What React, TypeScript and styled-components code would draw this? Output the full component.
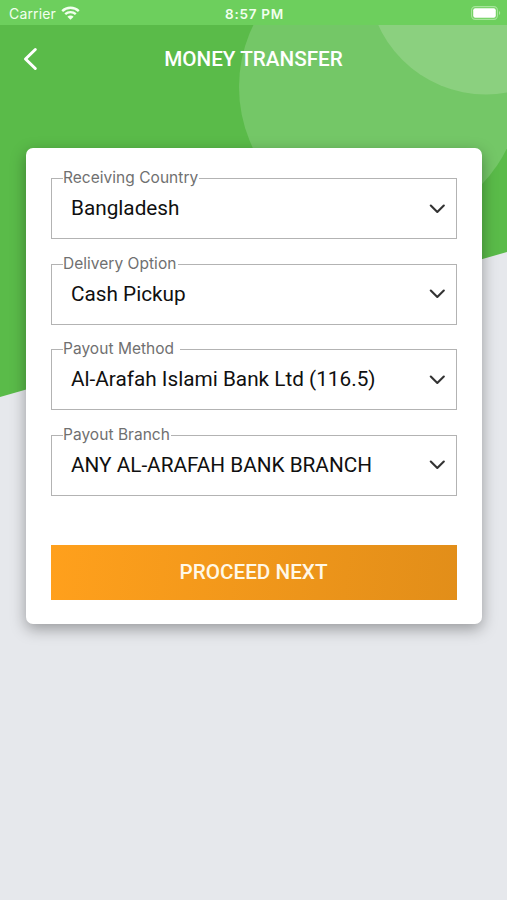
import React from "react";
import styled, { createGlobalStyle } from "styled-components";

const GlobalStyle = createGlobalStyle`
  * { box-sizing: border-box; }
  body { margin: 0; background: #e6e8ec; font-family: Roboto, "Liberation Sans", sans-serif; }
`;

const Screen = styled.main`
  position: relative;
  display: flex;
  flex-direction: column;
  height: 900px;
  overflow: hidden;
  background: #e6e8ec;
`;

const Backdrop = styled.svg`
  position: absolute;
  top: 0;
  left: 0;
  width: 507px;
  height: 400px;
`;

const StatusBar = styled.div`
  position: relative;
  display: grid;
  grid-template-columns: 1fr auto 1fr;
  align-items: center;
  height: 25px;
  padding: 2px 6px 0 9px;
  background: #6dcf5d;
  color: #f2ffef;
  font-family: Inter, sans-serif;
  font-size: 14px;
  line-height: 20px;
`;

const Carrier = styled.div`
  display: flex;
  align-items: center;
  gap: 5.5px;
  letter-spacing: 0.15px;

  svg {
    margin-top: -2px;
  }
`;

const Clock = styled.div`
  font-weight: 600;
  font-size: 13.5px;
  letter-spacing: 0.75px;
  padding-right: 1px;
`;

const Battery = styled.svg`
  justify-self: end;
  margin-top: -2px;
`;

const Header = styled.header`
  position: relative;
  display: grid;
  grid-template-columns: 48px 1fr 48px;
  align-items: center;
  height: 68px;
  color: #fff;
`;

const BackButton = styled.button`
  display: flex;
  padding: 0 0 0 22px;
  border: 0;
  background: none;
  color: inherit;
`;

const Title = styled.h1`
  margin: 0;
  text-align: center;
  font-size: 20.7px;
  font-weight: 500;
  line-height: 24px;
`;

const Card = styled.form`
  position: relative;
  display: flex;
  flex-direction: column;
  margin: 55px 25px 0 26px;
  height: 476px;
  padding: 30px 25px 24.5px;
  border-radius: 7px;
  background: #fff;
  box-shadow: 0 5px 15px rgba(0, 0, 0, 0.34);
`;

const Fields = styled.div`
  display: flex;
  flex-direction: column;
  gap: 24.5px;
`;

const Field = styled.div`
  position: relative;
  display: flex;
  align-items: center;
  justify-content: space-between;
  height: 61px;
  padding: 0 11px 0 19px;
  border: 1.5px solid #b3b3b3;
`;

const Label = styled.span<{ $width: number }>`
  position: absolute;
  top: -11px;
  left: 11px;
  width: ${(p) => p.$width}px;
  background: #fff;
  color: #707070;
  font-family: Inter, sans-serif;
  font-size: 15.5px;
  line-height: 20px;
  letter-spacing: 0.03px;
  white-space: nowrap;
`;

const Value = styled.span`
  color: #101010;
  font-size: 20.75px;
  line-height: 24px;
  margin-top: -0.4px;
  white-space: nowrap;
`;

const Submit = styled.button`
  height: 55px;
  margin-top: auto;
  padding: 0 1px 0 0;
  border: 0;
  background: linear-gradient(95deg, #ffa01c 0%, #e28e19 100%);
  color: #fff8e8;
  font-family: inherit;
  font-size: 20.7px;
  font-weight: 500;
`;

const fields = [
  { label: "Receiving Country", value: "Bangladesh", width: 136 },
  { label: "Delivery Option", value: "Cash Pickup", width: 115 },
  { label: "Payout Method", value: "Al-Arafah Islami Bank Ltd (116.5)", width: 117 },
  { label: "Payout Branch", value: "ANY AL-ARAFAH BANK BRANCH", width: 108 },
];

export default function App() {
  return (
    <>
      <GlobalStyle />
      <Screen>
        <Backdrop viewBox="0 0 507 400" aria-hidden="true">
          <defs>
            <clipPath id="slope">
              <path d="M0 0H507V252L0 397Z" />
            </clipPath>
          </defs>
          <g clipPath="url(#slope)">
            <rect width="507" height="400" fill="#5abb49" />
            <circle cx="380" cy="87" r="141" fill="#74c767" />
            <circle cx="486" cy="-24" r="118.5" fill="#8bd07f" />
          </g>
        </Backdrop>
        <StatusBar>
          <Carrier>
            Carrier
            <svg width="19" height="14" viewBox="0 0 19 14" fill="none" stroke="currentColor" strokeWidth="2.4">
              <path d="M1.2 5.1C5.8.7 13.2.7 17.8 5.1M4.2 8.2c3-2.8 7.6-2.8 10.6 0" />
              <path d="M6.4 10.7c1.8-1.6 4.4-1.6 6.2 0L9.5 13.8Z" fill="currentColor" stroke="none" />
            </svg>
          </Carrier>
          <Clock>8:57 PM</Clock>
          <Battery width="30" height="14" viewBox="0 0 30 14">
            <rect x=".6" y=".6" width="25.8" height="12.8" rx="3.6" fill="none" stroke="#a7e59c" strokeWidth="1.1" />
            <rect x="2.2" y="2.2" width="22.6" height="9.6" rx="2" fill="#fff" />
            <path d="M28 5v4c1.6-.6 1.6-3.4 0-4Z" fill="#a7e59c" />
          </Battery>
        </StatusBar>
        <Header>
          <BackButton type="button" aria-label="Back">
            <svg width="18" height="24" viewBox="0 0 18 24" fill="none" stroke="currentColor" strokeWidth="3" strokeLinecap="round" strokeLinejoin="round">
              <path d="M13.3 2.5 3.5 12l9.8 9.5" />
            </svg>
          </BackButton>
          <Title>MONEY TRANSFER</Title>
        </Header>
        <Card>
          <Fields>
            {fields.map((f) => (
              <Field key={f.label}>
                <Label $width={f.width}>{f.label}</Label>
                <Value>{f.value}</Value>
                <svg width="16" height="10" viewBox="0 0 16 10" fill="none" stroke="#333" strokeWidth="2.1" strokeLinecap="round" strokeLinejoin="round">
                  <path d="M1.8 1.5 8.3 7.9l6.5-6.4" />
                </svg>
              </Field>
            ))}
          </Fields>
          <Submit type="button">PROCEED NEXT</Submit>
        </Card>
      </Screen>
    </>
  );
}
